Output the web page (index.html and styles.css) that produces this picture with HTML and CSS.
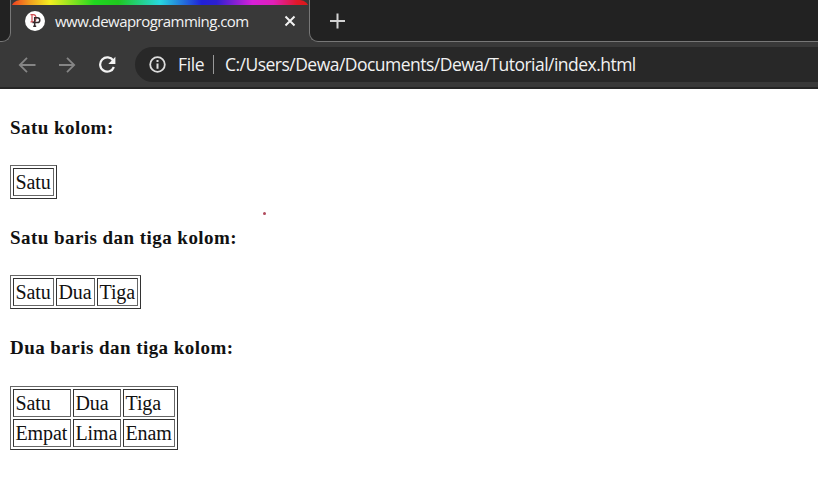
FILE: index.html
```
<!DOCTYPE html>
<html lang="id">
<head>
<meta charset="utf-8">
<title>www.dewaprogramming.com</title>
<link rel="stylesheet" href="styles.css">
</head>
<body>
<header class="browser">
  <div class="tabstrip">
    <div class="strip-start"></div>
    <div class="tab">
      <svg class="favicon" width="20" height="20" viewBox="0 0 20 20"><circle cx="10" cy="10" r="10" fill="#fff"/><path d="M5.5 3.7h2.7c2 0 2.8 1.2 2.8 3.4s-.8 3.7-2.8 3.7H5.5M7 3.7v6.8" fill="none" stroke="#d04d52" stroke-width="1.2"/><path d="M9.7 15.5V6.8h2.7c3.2 0 3.2 4.7 0 4.7H7.5M8.2 15.3h3" fill="none" stroke="#342b2d" stroke-width="1.5"/></svg>
      <span class="tab-title">www.dewaprogramming.com</span>
      <svg class="close" width="12" height="12" viewBox="0 0 12 12"><path d="M1.5 1.5l9 9m0-9l-9 9" stroke="#f2f2f2" stroke-width="2"/></svg>
    </div>
    <div class="strip-end">
      <svg width="16" height="16" viewBox="0 0 16 16"><path d="M8.5 .5v15M1 8h15" stroke="#d2d2d2" stroke-width="2"/></svg>
    </div>
  </div>
  <nav class="toolbar">
    <svg class="nav-icon" width="18" height="18" viewBox="0 0 18 18"><path d="M17.5 9H2M9 1.8L1.8 9 9 16.2" fill="none" stroke="#858585" stroke-width="1.8"/></svg>
    <svg class="nav-icon" width="18" height="18" viewBox="0 0 18 18"><path d="M1 9h15M9 1.8L16.2 9 9 16.2" fill="none" stroke="#858585" stroke-width="1.8"/></svg>
    <svg class="nav-icon" width="18" height="18" viewBox="0 0 18 18"><path d="M15.2 4.6A7.1 7.1 0 1 0 15.9 11" fill="none" stroke="#f2f2f2" stroke-width="2.2"/><path d="M17.4.7v7.2h-7.1z" fill="#f2f2f2"/></svg>
    <div class="address">
      <svg class="info" width="17" height="17" viewBox="0 0 17 17"><circle cx="8.5" cy="8.5" r="7.3" fill="none" stroke="#ddd" stroke-width="1.8"/><path d="M8.5 4v2M8.5 7.5v5.2" stroke="#ddd" stroke-width="2"/></svg>
      <span class="scheme">File</span>
      <span class="divider"></span>
      <span class="url">C:/Users/Dewa/Documents/Dewa/Tutorial/index.html</span>
    </div>
  </nav>
</header>
<main class="page">
  <h4 class="h-one">Satu kolom:</h4>
  <table class="single">
    <tr><td>Satu</td></tr>
  </table>
  <span class="dot"></span>
  <h4 class="h-two">Satu baris dan tiga kolom:</h4>
  <table class="row">
    <colgroup><col class="w41"><col class="w39"><col class="w41"></colgroup>
    <tr><td>Satu</td><td>Dua</td><td>Tiga</td></tr>
  </table>
  <h4 class="h-three">Dua baris dan tiga kolom:</h4>
  <table class="grid">
    <colgroup><col class="w58"><col class="w48"><col class="w52"></colgroup>
    <tr><td>Satu</td><td>Dua</td><td>Tiga</td></tr>
    <tr><td>Empat</td><td>Lima</td><td>Enam</td></tr>
  </table>
</main>
</body>
</html>
```
FILE: styles.css
```
* { box-sizing: border-box; }
body { margin: 0; background: #fff; color: #111; font-family: "Liberation Serif", serif; overflow: hidden; }
svg { display: block; flex: none; }

.browser { height: 89px; background: #393939; font-family: "Open Sans", sans-serif; color: #f2f2f2; border-bottom: 2px solid #252525; }
.tabstrip { display: flex; height: 42px; }
.strip-start { width: 11px; background: #222; border: solid #777; border-width: 0 1px 1px 0; border-bottom-right-radius: 9px; }
.tab { position: relative; width: 298px; display: flex; align-items: center; padding-left: 14px; background: #393939; }
.tab::before { content: ""; position: absolute; inset: 0 0 auto 0; height: 10px; border-radius: 9px 9px 0 0; background: linear-gradient(90deg, #f03a20 0%, #f09a20 6%, #f4ee20 13%, #20d820 28%, #20c820 36%, #28d8e0 50%, #2020d8 64%, #2c20d0 69%, #d820d8 81%, #e020b8 88%, #e01828 96%, #d81818 100%); clip-path: inset(0 0 5px 0); }
.tab-title { width: 194px; margin-left: 10px; font-size: 15px; line-height: 20px; letter-spacing: -0.55px; white-space: nowrap; }
.close { margin-left: 35px; }
.strip-end { flex: 1; padding: 13px 0 0 19px; background: #222; border: solid #777; border-width: 0 0 1px 1px; border-bottom-left-radius: 9px; }

.toolbar { display: flex; align-items: center; height: 45px; padding-left: 18px; }
.nav-icon { margin-right: 22px; }
.address { flex: 1; display: flex; align-items: center; height: 35px; margin-left: -3px; padding-left: 14px; background: #282828; border-radius: 18px 0 0 18px; font-size: 17.5px; line-height: 24px; white-space: nowrap; }
.scheme { width: 27px; margin-left: 12px; letter-spacing: -0.4px; }
.divider { width: 1px; height: 19px; margin: 0 11px 0 8px; background: #999; }
.url { letter-spacing: -0.52px; }
.scheme, .url { position: relative; top: -1px; }

.page { position: relative; padding-left: 10px; }
h4 { margin: 0; font-size: 19px; line-height: 22px; letter-spacing: 0.45px; }
.h-one { padding: 28px 0 26px; }
.h-two { padding: 28px 0 26px; }
.h-three { padding: 28px 0 27px; }
table { table-layout: fixed; border: 1px solid; border-color: #666 #333 #333 #666; border-collapse: separate; border-spacing: 2px; font-size: 20px; line-height: 22px; letter-spacing: -0.1px; }
td { height: 28px; padding: 2px 1px 2px 1.5px; border: 1px solid; border-color: #333 #666 #666 #333; white-space: nowrap; }
.single { width: 47px; }
.row { width: 131px; }
.grid { width: 168px; }
.w39 { width: 39px; }
.w41 { width: 41px; }
.w48 { width: 48px; }
.w52 { width: 52px; }
.w58 { width: 58px; }
.dot { position: absolute; left: 263px; top: 123px; width: 3px; height: 3px; border-radius: 50%; background: #b04a5c; }
```
